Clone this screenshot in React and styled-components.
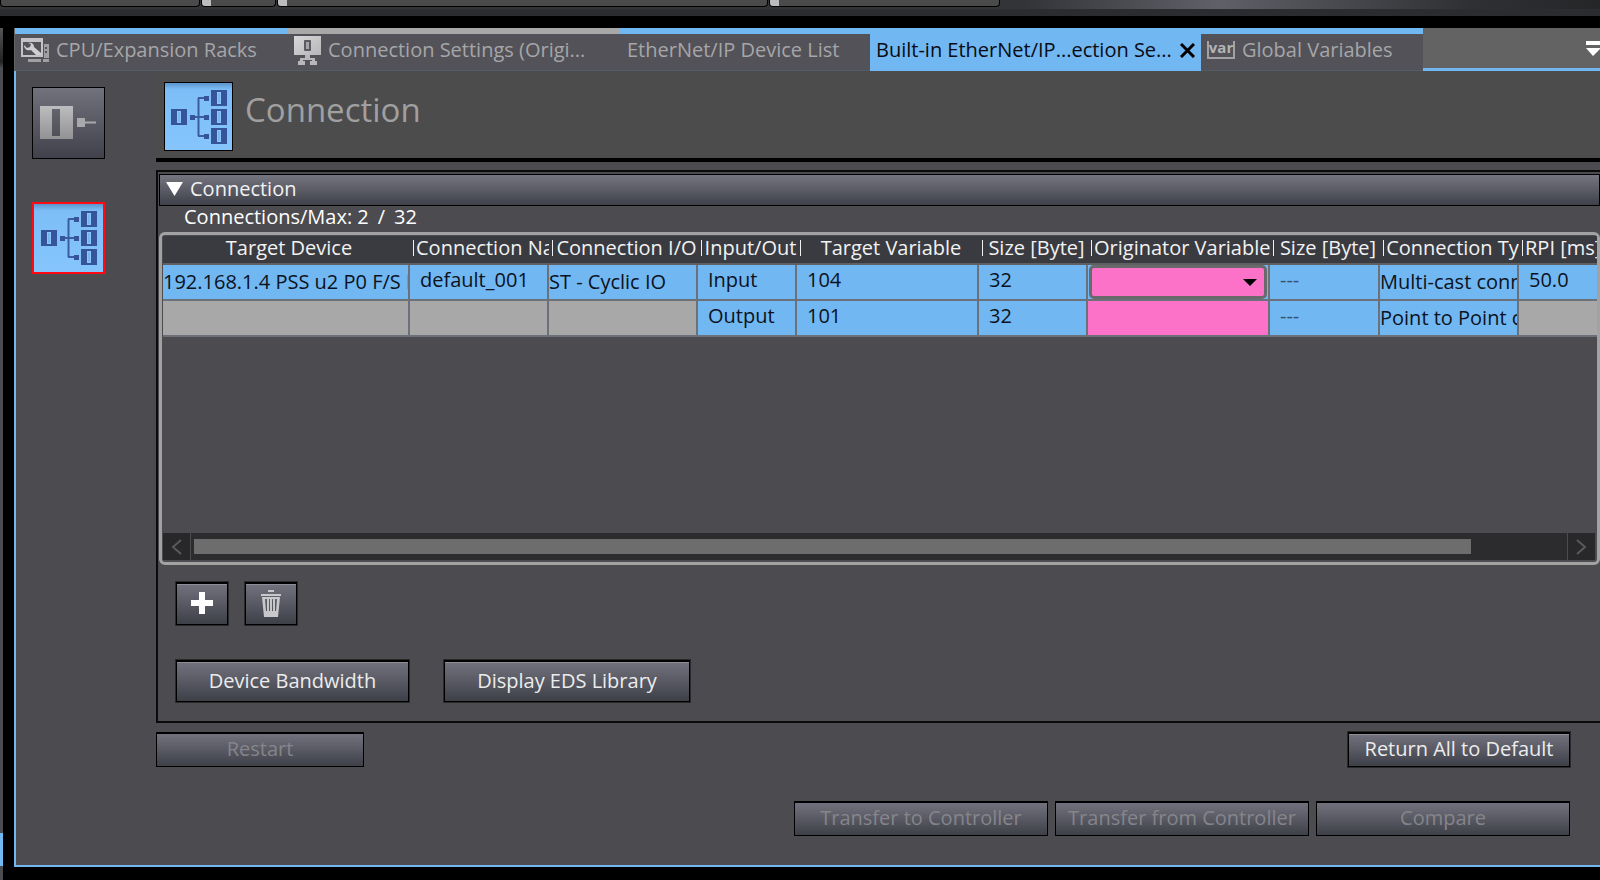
import React from "react";
import styled, { createGlobalStyle, css } from "styled-components";

const BLUE = "#71b7f2";
const GREY = "#a8a8a8";
const BG = "#4c4b50";

const GlobalStyle = createGlobalStyle`
  * { box-sizing: border-box; }
  body {
    margin: 0;
    background: #000;
    font-family: "Open Sans", "Noto Sans", sans-serif;
    font-size: 20px;
    line-height: 26px;
    color: #f2f2f2;
  }
  button, select { font: inherit; color: inherit; }
`;

const Window = styled.div`
  min-height: 100vh;
  display: flex;
  flex-direction: column;
  overflow: hidden;
`;

const TopStrip = styled.div`
  height: 16px;
  border-bottom: 7px solid #232528;
  border-image: linear-gradient(#050505 0 20%, #58585b 30% 45%, #2b2c30 60% 100%) 7;
  background: linear-gradient(90deg, #333438 0 64%, #606068 76%, #2f3033 92%, #252628);
  display: flex;
  gap: 1px;
`;

const TopTab = styled.div`
  width: ${(p) => p.$w}px;
  height: 7px;
  background: #4a4a4b;
  border: 1px solid #000;
  border-top: 0;
  border-radius: 0 0 4px 4px;
  overflow: hidden;
`;

const TopTabEdge = styled.div`
  width: 9px;
  height: 6px;
  background: #bcbcbc;
`;

const Middle = styled.div`
  flex: 1;
  display: flex;
  padding: 12px 0 13px;
`;

const LeftEdge = styled.div`
  width: 3px;
  margin-right: 11px;
  margin-bottom: -13px;
  background: linear-gradient(#55555a, #222 34px, ${BG} 40px);
  display: flex;
  flex-direction: column;
  justify-content: flex-end;
  padding-bottom: 14px;
`;

const EdgeMark = styled.div`
  height: 33px;
  background: ${BLUE};
`;

const Editor = styled.div`
  flex: 1;
  min-width: 0;
  display: flex;
  flex-direction: column;
`;

const TabBar = styled.div`
  display: flex;
  height: 43px;
  background: #636364;
  padding-left: 1px;
`;

const Tab = styled.div`
  width: ${(p) => p.$w}px;
  flex: none;
  display: flex;
  align-items: center;
  gap: ${(p) => p.$gap || 0}px;
  padding: 0 6px 4px ${(p) => p.$pad || 6}px;
  border-top: 6px solid ${(p) => (p.$grey ? GREY : BLUE)};
  border-bottom: 1px solid ${(p) => (p.$active ? BLUE : "#535c66")};
  background: ${(p) => (p.$active ? BLUE : "#525258")};
  color: ${(p) => (p.$active ? "#0a0a12" : "#a6a6a8")};
  white-space: nowrap;
`;

const TabButton = styled.button`
  border: 0;
  padding: 0;
  background: none;
  text-align: left;
`;

const TabClose = styled.button`
  border: 0;
  padding: 0;
  background: none;
  display: flex;
  margin-left: auto;
`;

const TabRest = styled.div`
  flex: 1;
  border-bottom: 3px solid ${BLUE};
  display: flex;
  justify-content: flex-end;
  align-items: center;
`;

const Body = styled.div`
  flex: 1;
  display: flex;
  background: ${BG};
  border-left: 2px solid ${BLUE};
  border-bottom: 2px solid ${BLUE};
`;

const Side = styled.nav`
  width: 140px;
  flex: none;
  padding: 16px 0 0 16px;
  display: flex;
  flex-direction: column;
  gap: 43px;
`;

const SideButton = styled.button`
  width: 73px;
  height: 72px;
  padding: 0;
  display: flex;
  border: 1px solid ${(p) => (p.$active ? "#ff0a14" : "#000")};
  border-width: ${(p) => (p.$active ? 2 : 1)}px;
  background: ${(p) =>
    p.$active
      ? "linear-gradient(#5c96cc, #7dbef8 10%, #85c5fc)"
      : "linear-gradient(#72727c, #40414a)"};
  align-items: center;
  justify-content: center;
`;

const Main = styled.main`
  flex: 1;
  min-width: 0;
  display: flex;
  flex-direction: column;
`;

const Heading = styled.header`
  height: 91px;
  border-bottom: 4px solid #000;
  background: #4c4c4d;
  display: flex;
  gap: 12px;
  padding: 11px 0 0 8px;
`;

const HeadingIcon = styled.div`
  width: 69px;
  height: 69px;
  border: 1px solid #000;
  background: linear-gradient(#5c96cc, #7dbef8 10%, #85c5fc);
  display: flex;
  align-items: center;
  justify-content: center;
`;

const Title = styled.h1`
  margin: 0;
  font-size: 33px;
  line-height: 56px;
  font-weight: 400;
  color: #a0a0a0;
`;

const Panel = styled.section`
  margin-top: 8px;
  border: 2px solid #0b0b0b;
  border-right: 0;
  padding: 2px 0 0 1px;
  flex: 1;
  display: flex;
  flex-direction: column;
`;

const SectionBar = styled.button`
  height: 32px;
  border: 1px solid #000;
  padding: 0 6px 3px;
  background: linear-gradient(#757580, #3f414a);
  display: flex;
  align-items: center;
  gap: 7px;
  width: 100%;
`;

const Count = styled.p`
  margin: 0;
  padding-left: 25px;
  height: 26px;
  line-height: 22px;
  display: flex;
  gap: 9px;
  color: #fff;
`;

const Frame = styled.div`
  flex: 1;
  border: 3px solid #a2a2a2;
  border-radius: 6px;
  padding: 1px 0 2px 1px;
  display: flex;
  flex-direction: column;
`;

const Scroller = styled.div`
  flex: 1;
  overflow: hidden;
`;

const Grid = styled.table`
  width: 100%;
  table-layout: fixed;
  border-collapse: separate;
  border-spacing: 0;
  white-space: nowrap;
`;

const Th = styled.th`
  height: 29px;
  padding: 0 0 0 3px;
  background: #3a3b41;
  border-bottom: 2px solid #606063;
  font-weight: 400;
  overflow: hidden;
`;

const ThLabel = styled.div`
  height: 16px;
  line-height: 16px;
  margin-bottom: 4px;
  padding-left: 2px;
  border-left: ${(p) => (p.$first ? "0" : "1px solid #f0f0f0")};
  display: flex;
  justify-content: safe center;
`;

const Td = styled.td`
  height: 36px;
  padding: ${(p) => (p.$flush ? "0" : "0 0 5px 10px")};
  overflow: hidden;
  border-right: 2px solid #6b7079;
  border-bottom: 2px solid #6b7079;
  background: ${(p) => p.$bg || BLUE};
  color: ${(p) => (p.$dim ? "#36506c" : "#0c121c")};
  &:last-child { border-right: 0; }
`;

const SelectWrap = styled.div`
  display: grid;
  align-items: center;
  background: ${BLUE};
  margin: 0 1px;
  & > * { grid-area: 1 / 1; }
  & > svg { justify-self: end; margin-right: 10px; pointer-events: none; }
`;

const PinkSelect = styled.select`
  appearance: none;
  width: 100%;
  height: 34px;
  border: 3px solid #6a6a6d;
  border-radius: 5px;
  background: #fb72c8;
`;

const ScrollBar = styled.div`
  height: 27px;
  display: flex;
  margin-right: 2px;
  background: #2c2c2e;
`;

const ScrollArrow = styled.button`
  width: 28px;
  border: 0 solid #4d4d4f;
  ${(p) => (p.$left ? css`border-right-width: 1px;` : css`border-left-width: 1px;`)}
  background: #28282a;
  padding: 0;
  display: flex;
  align-items: center;
  justify-content: center;
`;

const Track = styled.div`
  flex: 1;
  padding: 6px 0 6px 3px;
`;

const Thumb = styled.div`
  height: 15px;
  width: 93%;
  background: #6d6d6d;
`;

const Row = styled.div`
  display: flex;
  gap: ${(p) => p.$gap}px;
  justify-content: ${(p) => p.$justify || "flex-start"};
  padding: ${(p) => p.$pad || 0};
`;

const Button = styled.button`
  width: ${(p) => p.$w}px;
  height: ${(p) => p.$h || 35}px;
  border: 1px solid #000;
  border-top-width: 2px;
  padding: 0 0 2px;
  background: linear-gradient(#72727e, #3e4048);
  box-shadow: ${(p) => (p.disabled ? "none" : "inset 0 1px #8d8d96")}, 0 0 0 1px #2a2a2d;
  color: ${(p) => (p.disabled ? "#85858b" : "#ececec")};
  display: flex;
  align-items: center;
  justify-content: center;
  white-space: nowrap;
`;

function NetworkIcon() {
  const node = (x, y) => (
    <g key={`${x}-${y}`}>
      <rect x={x} y={y} width="16" height="16" fill="#36549a" />
      <rect x={x + 6} y={y + 2} width="4" height="12" fill="#8cc8fb" />
      <rect x={x + 7} y={y + 3} width="2" height="10" fill="#79b8ee" />
    </g>
  );
  return (
    <svg width="56" height="54" viewBox="0 0 56 54" aria-hidden="true">
      <path d="M21 27h14M27.500 8v38M27 8h8M27 46h8" stroke="#3c5ca2" strokeWidth="2" fill="none" />
      <path d="M19 25h5v5h-5zM33 25h5v5h-5zM33 6h5v5h-5zM33 44h5v5h-5z" fill="#36549a" />
      {node(0, 19)}
      {node(40, 0)}
      {node(40, 19)}
      {node(40, 38)}
    </svg>
  );
}

function DeviceIcon() {
  return (
    <svg width="57" height="34" viewBox="0 0 57 34" aria-hidden="true">
      <defs>
        <linearGradient id="dev" x1="0" y1="0" x2="0" y2="1">
          <stop offset="0" stopColor="#bdbdbf" />
          <stop offset="1" stopColor="#929295" />
        </linearGradient>
      </defs>
      <path d="M0 0h33v33H0zM12 3v27h8V3z" fillRule="evenodd" fill="url(#dev)" />
      <path d="M37 12h8v9h-8zM45 15.500h11v2H45z" fill="#a9a9ab" />
    </svg>
  );
}

function RackIcon() {
  return (
    <svg width="28" height="25" viewBox="0 0 28 25" aria-hidden="true">
      <path d="M23 6h5v14h-5zM7 21h13v3H7zM22 21h6v3h-6z" fill="#a0a0a3" />
      <path d="M24 9h2v2h-2zM24 13h2v2h-2z" fill="#55565c" />
      <path d="M0 0h22v19H0zM2 4v13h18V4z" fillRule="evenodd" fill="#c4c4c6" />
      <path d="M3 7l3 3 3-1 1-3-3-1c4-1 6 1 6 4l7 6v2h-5l-5-5c-4 1-7-1-7-5z" fill="#cfcfd1" />
    </svg>
  );
}

function MonitorIcon() {
  return (
    <svg width="28" height="29" viewBox="0 0 28 29" aria-hidden="true">
      <defs>
        <linearGradient id="mon" x1="0" y1="0" x2="1" y2="1">
          <stop offset="0" stopColor="#d8d8da" />
          <stop offset="1" stopColor="#b6b6b8" />
        </linearGradient>
      </defs>
      <rect width="27" height="19" fill="url(#mon)" />
      <rect x="10" y="4" width="7" height="11" rx="1" fill="#5a5a60" />
      <rect x="12" y="6" width="3" height="7" fill="#a5a5a8" />
      <path d="M11 19h5v3h5v3h2v4h-7v-4h2v-1H9v1h2v4H4v-4h2v-3h5z" fill="#b8b8ba" />
    </svg>
  );
}

const VarBadge = styled.span`
  width: 28px;
  height: 18px;
  border: 2px solid #a2a2a4;
  border-top: 0;
  font-size: 15px;
  line-height: 13px;
  font-weight: 700;
  display: flex;
  justify-content: center;
  color: #b4b4b6;
`;

const columns = [
  ["Target Device", 247],
  ["Connection Na", 139],
  ["Connection I/O", 149],
  ["Input/Out", 99],
  ["Target Variable", 182],
  ["Size [Byte]", 109],
  ["Originator Variable", 182],
  ["Size [Byte]", 110],
  ["Connection Ty", 139],
  ["RPI [ms]", null],
];

export default function App() {
  return (
    <>
      <GlobalStyle />
      <Window>
        <TopStrip>
          <TopTab $w={200} />
          <TopTab $w={75}><TopTabEdge /></TopTab>
          <TopTab $w={491}><TopTabEdge /></TopTab>
          <TopTab $w={231}><TopTabEdge /></TopTab>
        </TopStrip>
        <Middle>
          <LeftEdge><EdgeMark /></LeftEdge>
          <Editor>
            <TabBar>
              <Tab $w={272} $gap={7}><RackIcon /><TabButton>CPU/Expansion Racks</TabButton></Tab>
              <Tab $w={333} $gap={6} $pad={7} $grey><MonitorIcon /><TabButton>Connection Settings (Origi...</TabButton></Tab>
              <Tab $w={250} $pad={7}><TabButton>EtherNet/IP Device List</TabButton></Tab>
              <Tab $w={331} $pad={6} $active>
                <TabButton>Built-in EtherNet/IP...ection Se...</TabButton>
                <TabClose aria-label="Close tab">
                  <svg width="15" height="15" viewBox="0 0 15 15"><path d="M1 1l13 13M14 1L1 14" stroke="#000" strokeWidth="3" /></svg>
                </TabClose>
              </Tab>
              <Tab $w={222} $gap={7}><VarBadge>var</VarBadge><TabButton>Global Variables</TabButton></Tab>
              <TabRest>
                <TabClose aria-label="Tab list">
                  <svg width="14" height="15" viewBox="0 0 14 15"><path d="M0 0h14v4H0zM0 7h14v1l-7 7z" fill="#fff" /></svg>
                </TabClose>
              </TabRest>
            </TabBar>
            <Body>
              <Side>
                <SideButton aria-label="Device"><DeviceIcon /></SideButton>
                <SideButton aria-label="Connection" $active><NetworkIcon /></SideButton>
              </Side>
              <Main>
                <Heading>
                  <HeadingIcon><NetworkIcon /></HeadingIcon>
                  <Title>Connection</Title>
                </Heading>
                <Panel>
                  <SectionBar>
                    <svg width="17" height="14" viewBox="0 0 17 14"><path d="M0 0h17L8.500 14z" fill="#fff" /></svg>
                    Connection
                  </SectionBar>
                  <Count><span>Connections/Max: 2</span><span>/</span><span>32</span></Count>
                  <Frame>
                    <Scroller>
                      <Grid>
                        <colgroup>
                          {columns.map(([, w], i) => <col key={i} width={w || undefined} />)}
                        </colgroup>
                        <thead>
                          <tr>
                            {columns.map(([name], i) => (
                              <Th key={i} scope="col"><ThLabel $first={i === 0}>{name}</ThLabel></Th>
                            ))}
                          </tr>
                        </thead>
                        <tbody>
                          <tr>
                            <Td $flush>192.168.1.4 PSS u2 P0 F/S E</Td>
                            <Td>default_001</Td>
                            <Td $flush>ST - Cyclic IO</Td>
                            <Td>Input</Td>
                            <Td>104</Td>
                            <Td>32</Td>
                            <Td $flush>
                              <SelectWrap>
                                <PinkSelect aria-label="Originator Variable" defaultValue=""><option value="" /></PinkSelect>
                                <svg width="14" height="7" viewBox="0 0 14 7"><path d="M0 0h14L7 7z" fill="#000" /></svg>
                              </SelectWrap>
                            </Td>
                            <Td $dim>---</Td>
                            <Td $flush>Multi-cast conn</Td>
                            <Td>50.0</Td>
                          </tr>
                          <tr>
                            <Td $bg={GREY} />
                            <Td $bg={GREY} />
                            <Td $bg={GREY} />
                            <Td>Output</Td>
                            <Td>101</Td>
                            <Td>32</Td>
                            <Td $bg="#fb72c8" />
                            <Td $dim>---</Td>
                            <Td $flush>Point to Point c</Td>
                            <Td $bg={GREY} />
                          </tr>
                        </tbody>
                      </Grid>
                    </Scroller>
                    <ScrollBar>
                      <ScrollArrow $left aria-label="Scroll left">
                        <svg width="11" height="16" viewBox="0 0 11 16"><path d="M10 1L2 8l8 7" stroke="#5a5a5c" strokeWidth="2" fill="none" /></svg>
                      </ScrollArrow>
                      <Track><Thumb /></Track>
                      <ScrollArrow aria-label="Scroll right">
                        <svg width="11" height="16" viewBox="0 0 11 16"><path d="M1 1l8 7-8 7" stroke="#5a5a5c" strokeWidth="2" fill="none" /></svg>
                      </ScrollArrow>
                    </ScrollBar>
                  </Frame>
                  <Row $gap={17} $pad="17px 17px 0">
                    <Button $w={52} $h={43} aria-label="Add">
                      <svg width="22" height="22" viewBox="0 0 22 22"><path d="M8 0h6v8h8v6h-8v8H8v-8H0V8h8z" fill="#fff" /></svg>
                    </Button>
                    <Button $w={52} $h={43} aria-label="Delete">
                      <svg width="20" height="27" viewBox="0 0 20 27">
                        <path d="M7 0h6v2H7zM0 4h20v2H0zM1 7h18l-2 20H3zM4 9l1 12h1V9zM8 9v12h1V9zM11 9v12h1V9zM14 9v12h1l1-12z" fillRule="evenodd" fill="#c8c8ca" />
                      </svg>
                    </Button>
                  </Row>
                  <Row $gap={35} $pad="35px 17px 19px">
                    <Button $w={233} $h={42}>Device Bandwidth</Button>
                    <Button $w={246} $h={42}>Display EDS Library</Button>
                  </Row>
                </Panel>
                <Row $justify="space-between" $pad="9px 30px 0 0">
                  <Button $w={208} disabled>Restart</Button>
                  <Button $w={222}>Return All to Default</Button>
                </Row>
                <Row $gap={7} $justify="flex-end" $pad="34px 30px 29px 0">
                  <Button $w={254} disabled>Transfer to Controller</Button>
                  <Button $w={254} disabled>Transfer from Controller</Button>
                  <Button $w={254} disabled>Compare</Button>
                </Row>
              </Main>
            </Body>
          </Editor>
        </Middle>
      </Window>
    </>
  );
}
